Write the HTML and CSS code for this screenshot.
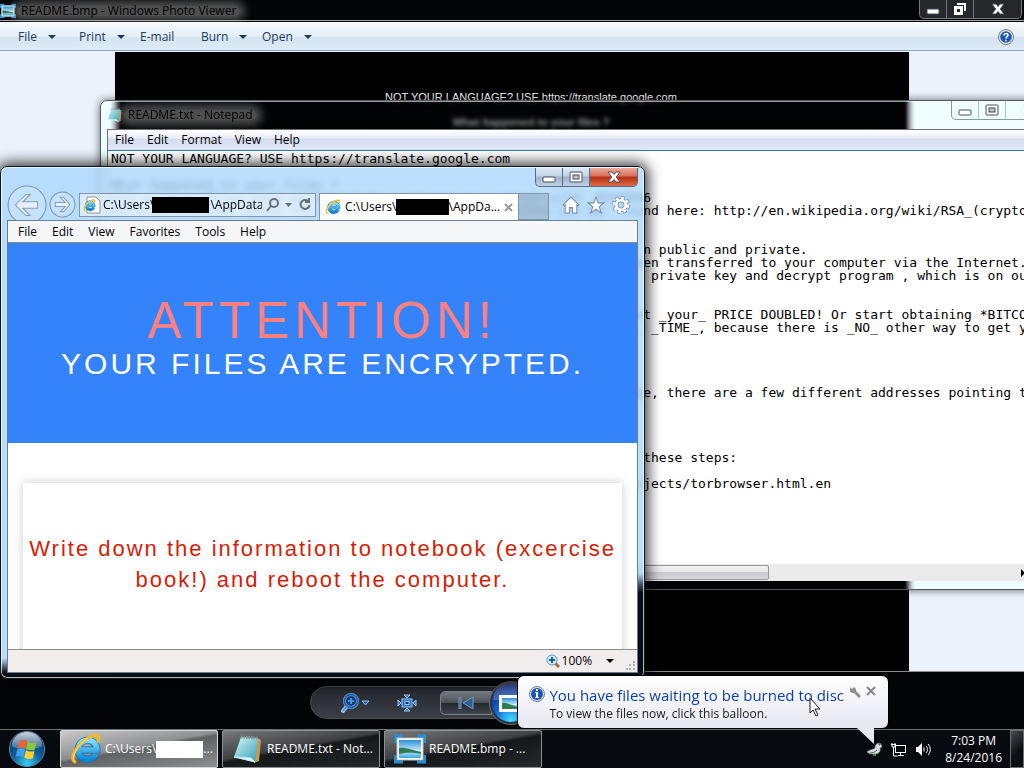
FILE: index.html
```html
<!DOCTYPE html>
<html lang="en">
<head>
    <meta charset="UTF-8">
    <meta name="viewport" content="width=device-width, initial-scale=1.0">
    <title>Desktop</title>
    <link rel="stylesheet" href="styles.css">
</head>
<body>
    <!-- shared icons -->
    <svg class="defs" aria-hidden="true">
        <defs>
            <linearGradient id="ie-blue" x1="0" y1="0" x2="0" y2="1">
                <stop offset="0" stop-color="#7fe0ff"/>
                <stop offset="1" stop-color="#1186d4"/>
            </linearGradient>
            <linearGradient id="sky" x1="0" y1="0" x2="0" y2="1">
                <stop offset="0" stop-color="#2c8fd8"/>
                <stop offset=".6" stop-color="#c9ecfb"/>
                <stop offset="1" stop-color="#3ba3d8"/>
            </linearGradient>
            <linearGradient id="pad" x1="0" y1="0" x2="1" y2="1">
                <stop offset="0" stop-color="#d8f6fa"/>
                <stop offset="1" stop-color="#2f9fb4"/>
            </linearGradient>
            <radialGradient id="orb" cx=".5" cy=".9" r=".9">
                <stop offset="0" stop-color="#35d0f5"/>
                <stop offset=".45" stop-color="#0f5f9c"/>
                <stop offset="1" stop-color="#0b2f55"/>
            </radialGradient>
            <linearGradient id="orb-shine" x1="0" y1="0" x2="0" y2="1">
                <stop offset="0" stop-color="#fff" stop-opacity=".8"/>
                <stop offset="1" stop-color="#fff" stop-opacity=".15"/>
            </linearGradient>
            <radialGradient id="play" cx=".5" cy=".95" r=".9">
                <stop offset="0" stop-color="#3fe0ff"/>
                <stop offset=".5" stop-color="#1560d0"/>
                <stop offset="1" stop-color="#0d2a8a"/>
            </radialGradient>
        </defs>
        <symbol id="i-ie" viewBox="0 0 32 32">
            <path d="M26 21a9.500 9.500 0 1 1 1-4H9" fill="none" stroke="#0f6fb5" stroke-width="7"/>
            <path d="M26 21a9.500 9.500 0 1 1 1-4H9" fill="none" stroke="url(#ie-blue)" stroke-width="5.500"/>
            <path d="M5 29C-2 26 8 10 18 5c7-4 13-4 10 3" fill="none" stroke="#f7b81c" stroke-width="3" stroke-linecap="round"/>
            <path d="M5 28C0 25 9 10 18 5" fill="none" stroke="#ffe27a" stroke-width="1"/>
        </symbol>
        <symbol id="i-pad" viewBox="0 0 32 32">
            <path d="M25 5l4 2-2 21-5 2z" fill="#c79a54"/>
            <path d="M9 4l17 1-3 24-21-5z" fill="url(#pad)"/>
            <path d="M2 24l21 5-4-4z" fill="#e8fbfd" stroke="#bdeff5"/>
            <path d="M9 4l17 1" stroke="#8a8f92" stroke-width="3" stroke-dasharray="1.500 1"/>
        </symbol>
        <symbol id="i-photo" viewBox="0 0 32 28">
            <path d="M1 8V1h8M23 1h8v7M31 20v7h-8M9 27H1v-7" fill="none" stroke="#1f8fd6" stroke-width="3"/>
            <rect x="3" y="3" width="26" height="22" fill="#fff" stroke="#b5c2cc"/>
            <rect x="5" y="5" width="22" height="18" fill="url(#sky)"/>
            <path d="M5 13c6-1 12 2 22 4v2c-9-2-16-1-22 0z" fill="#2f7d54"/>
        </symbol>
        <symbol id="i-min" viewBox="0 0 14 12"><rect x="1" y="6" width="12" height="5" rx="1" fill="#fff" stroke="#4a4e58"/></symbol>
        <symbol id="i-max" viewBox="0 0 14 12">
            <rect x="1" y="1" width="12" height="10" rx="1" fill="#fff" stroke="#4a4e58"/>
            <rect x="4" y="4" width="6" height="4" fill="#b9c4d0" stroke="#4a4e58"/>
        </symbol>
        <symbol id="i-restore" viewBox="0 0 14 12">
            <path d="M4 0h9v8h-2V2H4z" fill="#fff"/>
            <path d="M1 3h9v9H1zM4 6v3h3V6z" fill="#fff" fill-rule="evenodd"/>
        </symbol>
        <symbol id="i-close" viewBox="0 0 14 12">
            <path d="M1 1h4l2 2.500L9 1h4L9.300 6l3.700 5H9L7 8.500 5 11H1l3.700-5z" fill="#fff" stroke="#4a4e58"/>
        </symbol>
        <symbol id="i-down" viewBox="0 0 8 4"><path d="M0 0h8L4 4z" fill="currentColor"/></symbol>
    </svg>

    <div class="desktop">

        <!-- Photo viewer -->
        <section class="window viewer">
            <header class="titlebar">
                <svg class="icon16"><use href="#i-photo"/></svg>
                <span class="glow">README.bmp - Windows Photo Viewer</span>
                <div class="caption">
                    <button class="cap-min" aria-label="Minimize"><svg><use href="#i-min"/></svg></button>
                    <button class="cap-max" aria-label="Restore"><svg><use href="#i-restore"/></svg></button>
                    <button class="cap-close" aria-label="Close"><svg><use href="#i-close"/></svg></button>
                </div>
            </header>
            <nav class="viewer-menu">
                <button>File <svg><use href="#i-down"/></svg></button>
                <button>Print <svg><use href="#i-down"/></svg></button>
                <button>E-mail</button>
                <button>Burn <svg><use href="#i-down"/></svg></button>
                <button>Open <svg><use href="#i-down"/></svg></button>
                <button class="help" aria-label="Help">
                    <svg viewBox="0 0 16 16">
                        <circle cx="8" cy="8" r="7.500" fill="#e8e8e8" stroke="#777"/>
                        <circle cx="8" cy="8" r="5.800" fill="#1d55b8"/>
                        <path d="M6 6.500C6 3.800 10.200 4 10 6.300 9.900 7.700 8 7.700 8 9.500M8 10.700v1.500" fill="none" stroke="#fff" stroke-width="1.600"/>
                    </svg>
                </button>
            </nav>
            <div class="viewer-canvas">
                <div class="photo">
                    <p>NOT YOUR LANGUAGE? USE https://translate.google.com</p>
                    <p><strong>What happened to your files ?</strong></p>
                </div>
            </div>
            <footer class="viewer-controls">
                <div class="pill">
                    <button class="zoom" aria-label="Change the display size">
                        <svg width="30" height="20" viewBox="0 0 30 20">
                            <path d="M7 13l-4 5" stroke="#9cc7f5" stroke-width="4" stroke-linecap="round"/>
                            <circle cx="11" cy="8" r="6.500" fill="#1c3a66" stroke="#7fb0e6" stroke-width="3"/>
                            <circle cx="11" cy="8" r="6.500" fill="none" stroke="#1e62b8" stroke-width="2"/>
                            <path d="M7 13l-4 5M11 5v6M8 8h6" stroke="#3f92ee" stroke-width="2"/>
                            <path d="M22 8h7l-3.500 4z" fill="#1e62b8" stroke="#8dbdf0"/>
                        </svg>
                    </button>
                    <button class="fit" aria-label="Actual size">
                        <svg width="20" height="18" viewBox="0 0 20 18">
                            <g fill="#2a72c8" stroke="#9cc7f5">
                                <rect x="5" y="5" width="10" height="8"/>
                                <rect x="8" y="7.500" width="4" height="3" fill="#22364f"/>
                                <path d="M7 1h6l-3 3zM7 17h6l-3-3zM1 6v6l3-3zM19 6v6l-3-3z"/>
                            </g>
                        </svg>
                    </button>
                    <button class="prev" aria-label="Previous">
                        <svg width="16" height="12" viewBox="0 0 16 12">
                            <path d="M1 0h2v12H1zM15 0v12L5 6z" fill="#2d5f96" stroke="#7d9cba"/>
                        </svg>
                    </button>
                    <button class="show" aria-label="Play slide show">
                        <svg width="44" height="44" viewBox="0 0 44 44">
                            <circle cx="22" cy="22" r="21.500" fill="#2a3340" stroke="#66707c"/>
                            <circle cx="22" cy="22" r="19" fill="url(#play)"/>
                            <path d="M4 19a18 18 0 0 1 36 0z" fill="#fff" opacity=".2"/>
                            <rect x="10" y="14" width="24" height="17" fill="#fff"/>
                            <rect x="13" y="17" width="18" height="11" fill="url(#sky)"/>
                            <path d="M13 22c5-1 10 3 18 4v2H13z" fill="#2f7d54"/>
                        </svg>
                    </button>
                </div>
            </footer>
        </section>

        <!-- Notepad -->
        <section class="window notepad">
            <header class="titlebar">
                <svg class="icon16"><use href="#i-pad"/></svg>
                <span class="glow">README.txt - Notepad</span>
                <div class="caption">
                    <button class="cap-min" aria-label="Minimize"><svg><use href="#i-min"/></svg></button>
                    <button class="cap-max" aria-label="Maximize"><svg><use href="#i-max"/></svg></button>
                    <button class="cap-close" aria-label="Close"><svg><use href="#i-close"/></svg></button>
                </div>
            </header>
            <nav class="menubar">
                <button>File</button>
                <button>Edit</button>
                <button>Format</button>
                <button>View</button>
                <button>Help</button>
            </nav>
            <textarea class="note" wrap="off" readonly aria-label="README.txt">NOT YOUR LANGUAGE? USE https://translate.google.com

What happened to your files ?
All of your files were protected by a strong encryption with  RSA4096
More information about the encryption keys using RSA4096 can be  found here: http://en.wikipedia.org/wiki/RSA_(cryptography)


                                                                    n public and private.
                                                                  been transferred to your computer via the Internet.
                                                                     private key and decrypt program , which is on our


                                                                  get _your_ PRICE DOUBLED! Or start obtaining *BITCOIN*
                                                                  L_ _TIME_, because there is _NO_ other way to get your




                                                                 page, there are a few different addresses pointing to




                                                                    these steps:

                                                                   ojects/torbrowser.html.en</textarea>
            <div class="hscroll"><div class="thumb"></div><svg><use href="#i-down"/></svg></div>
        </section>

        <!-- Internet Explorer -->
        <section class="window browser">
            <div class="caption">
                <button class="cap-min" aria-label="Minimize"><svg><use href="#i-min"/></svg></button>
                <button class="cap-max" aria-label="Maximize"><svg><use href="#i-max"/></svg></button>
                <button class="cap-close" aria-label="Close"><svg><use href="#i-close"/></svg></button>
            </div>
            <div class="navrow">
                <button class="back" aria-label="Back">
                    <svg viewBox="0 0 38 38">
                        <circle cx="19" cy="19" r="18" fill="#fff" fill-opacity=".15" stroke="#7f95ab"/>
                        <path d="M8 19l10-10h4l-7 7h14v6H15l7 7h-4z" fill="#e6f2fd" stroke="#8a9cae"/>
                    </svg>
                </button>
                <button class="forward" aria-label="Forward">
                    <svg viewBox="0 0 26 26">
                        <circle cx="13" cy="13" r="12" fill="#fff" fill-opacity=".15" stroke="#7f95ab"/>
                        <path d="M20 13l-6-7h-3l4.500 5H6v4h9.500L11 20h3z" fill="#e6f2fd" stroke="#8a9cae"/>
                    </svg>
                </button>
                <div class="address">
                    <svg class="page-icon" viewBox="0 0 18 18">
                        <path d="M4 1h9l4 4v12H4z" fill="#fff" stroke="#8b949e"/>
                        <use href="#i-ie" x="0" y="3" width="13" height="13"/>
                    </svg>
                    <div class="url">
                        <input type="text" aria-label="Address" readonly value="C:\Users\&nbsp;&nbsp;&nbsp;&nbsp;&nbsp;&nbsp;&nbsp;&nbsp;&nbsp;&nbsp;&nbsp;&nbsp;&nbsp;&nbsp;&nbsp;&nbsp;&nbsp;&nbsp;\AppData\">
                        <span class="redact"></span>
                    </div>
                    <svg class="addr-tools" width="46" height="16" viewBox="0 0 46 16" fill="none" stroke="#666f7a" stroke-width="2">
                        <circle cx="8" cy="6" r="4"/>
                        <path d="M5 9l-4 5"/>
                        <path d="M19 6h7l-3.500 4z" fill="#666f7a" stroke="none"/>
                        <path d="M42 4a4.500 4.500 0 1 0 1.500 4M43 1v4h-4"/>
                    </svg>
                </div>
                <div class="tab">
                    <svg class="icon16"><use href="#i-ie"/></svg>
                    <span class="tab-title">C:\Users\<i class="mask"></i>\AppDa...</span>
                    <button aria-label="Close tab">
                        <svg width="9" height="9" viewBox="0 0 9 9"><path d="M1 1l7 7M8 1L1 8" stroke="#999" stroke-width="2"/></svg>
                    </button>
                </div>
                <button class="newtab" aria-label="New tab"></button>
                <div class="tools">
                    <button aria-label="Home">
                        <svg viewBox="0 0 17 17"><path d="M8.500 1L16 8.500l-1 1-1-1V16h-4v-5H7v5H3V8.500l-1 1-1-1z" fill="#fff" stroke="#7b8ea3"/></svg>
                    </button>
                    <button aria-label="Favorites">
                        <svg viewBox="0 0 17 17"><path d="M8.500 1l2 5.500H16l-4.500 3.500 2 6-5-3.500-5 3.500 2-6L1 6.500h5.500z" fill="#fff" stroke="#7b8ea3"/></svg>
                    </button>
                    <button aria-label="Settings">
                        <svg viewBox="0 0 17 17">
                            <circle cx="8.500" cy="8.500" r="6.500" fill="none" stroke="#7b8ea3" stroke-width="4" stroke-dasharray="3 2.100"/>
                            <circle cx="8.500" cy="8.500" r="4.500" fill="none" stroke="#7b8ea3" stroke-width="4"/>
                            <circle cx="8.500" cy="8.500" r="6.500" fill="none" stroke="#fff" stroke-width="2.500" stroke-dasharray="2.600 2.500"/>
                            <circle cx="8.500" cy="8.500" r="4.500" fill="none" stroke="#fff" stroke-width="2.500"/>
                        </svg>
                    </button>
                </div>
            </div>
            <div class="client">
                <nav class="menubar">
                    <button>File</button>
                    <button>Edit</button>
                    <button>View</button>
                    <button>Favorites</button>
                    <button>Tools</button>
                    <button>Help</button>
                </nav>
                <main class="page">
                    <div class="hero">
                        <h1>ATTENTION!</h1>
                        <h2>YOUR FILES ARE ENCRYPTED.</h2>
                    </div>
                    <div class="card">
                        <p>Write down the information to notebook (excercise book!) and reboot the computer.</p>
                    </div>
                </main>
                <footer class="status">
                    <button>
                        <svg width="14" height="14" viewBox="0 0 14 14">
                            <path d="M9 9l4 4" stroke="#a5703a" stroke-width="3"/>
                            <circle cx="6" cy="6" r="5" fill="#dff0ff" stroke="#5b8fc4"/>
                            <path d="M6 3v6M3 6h6" stroke="#0d5cb8" stroke-width="2"/>
                        </svg>
                        100%
                        <svg class="arrow"><use href="#i-down"/></svg>
                    </button>
                    <svg class="grip" width="9" height="9" viewBox="0 0 9 9" fill="#b0aeae">
                        <path d="M7 0h2v2H7zM7 3h2v2H7zM7 7h2v2H7zM3 3h2v2H3zM3 7h2v2H3zM0 7h2v2H0z"/>
                    </svg>
                </footer>
            </div>
        </section>

        <footer class="taskbar">
            <button class="start" aria-label="Start">
                <svg viewBox="0 0 40 40">
                    <circle cx="20" cy="20" r="18.500" fill="url(#orb)" stroke="#5f87a8"/>
                    <path d="M4 17a16 15 0 0 1 32 0c-9 5-23 5-32 0z" fill="url(#orb-shine)"/>
                    <path d="M13 11c2-1 5-1 7 1l-2 8c-2-2-5-2-8-1z" fill="#f0642c"/>
                    <path d="M21 12c3 2 6 2 9 1l-2 8c-3 1-6 0-9-1z" fill="#8cc63f"/>
                    <path d="M10 20c3-1 6-1 8 1l-2 8c-3-2-5-2-8-1z" fill="#3fa2e8"/>
                    <path d="M19 21c3 2 6 2 9 1l-2 8c-4 1-7 0-9-1z" fill="#ffd02f"/>
                </svg>
            </button>
            <button class="task active">
                <svg class="icon32"><use href="#i-ie"/></svg>
                <span>C:\Users\<i class="mask"></i>...</span>
            </button>
            <button class="task">
                <svg class="icon32"><use href="#i-pad"/></svg>
                <span>README.txt - Not...</span>
            </button>
            <button class="task">
                <svg class="icon32"><use href="#i-photo"/></svg>
                <span>README.bmp - ...</span>
            </button>
            <div class="tray">
                <button aria-label="Burn disc">
                    <svg width="17" height="16" viewBox="0 0 17 16">
                        <path d="M1 11c3-3 6-2 8-4 0-4 3-6 6-4l1 3-2 1c1 4-2 6-5 6H4z" fill="#d9dde0" stroke="#7d858c" stroke-width=".700"/>
                        <path d="M4 12c3 0 5-1 7-3M13 3h1v1h-1z" stroke="#555" fill="none"/>
                        <path d="M7 14h3" stroke="#4caf50" stroke-width="1.500"/>
                    </svg>
                </button>
                <button aria-label="Network">
                    <svg width="16" height="15" viewBox="0 0 16 15" fill="none" stroke="#fff">
                        <rect x="4.500" y="3.500" width="10" height="7"/>
                        <path d="M7 13.500h6M9.500 11v2M2.500 5v9h4M1 1v4h3V1M0 2.500h5"/>
                    </svg>
                </button>
                <button aria-label="Volume">
                    <svg width="16" height="15" viewBox="0 0 16 15">
                        <path d="M1 5h2l4-4v13l-4-4H1z" fill="#fff"/>
                        <path d="M9 5.500v4M11 4c2 2 2 5 0 7M13 2c3 3 3 8 0 11" fill="none" stroke="#fff"/>
                    </svg>
                </button>
                <div class="clock">
                    <div>7:03 PM</div>
                    <div>8/24/2016</div>
                </div>
                <button class="peek" aria-label="Show desktop"></button>
            </div>
        </footer>

        <aside class="balloon">
            <svg class="info" viewBox="0 0 16 16">
                <circle cx="8" cy="8" r="7.500" fill="#dfe6f2" stroke="#6d7f9e"/>
                <circle cx="8" cy="8" r="6" fill="#1c56b8"/>
                <path d="M7 3h2v2H7zM6 6h3v5h1v1H6v-1h1V7H6z" fill="#fff"/>
            </svg>
            <div class="balloon-text">
                <a href="#">You have files waiting to be burned to disc</a>
                <p>To view the files now, click this balloon.</p>
            </div>
            <button aria-label="Options">
                <svg width="12" height="12" viewBox="0 0 12 12">
                    <path d="M4 4l7 7" stroke="#8e8e93" stroke-width="3"/>
                    <path d="M1 1l2 2 2-2 2 2v3L4 7 1 6z" fill="#8e8e93"/>
                </svg>
            </button>
            <button aria-label="Close">
                <svg width="10" height="10" viewBox="0 0 10 10"><path d="M1 1l8 8M9 1L1 9" stroke="#85858a" stroke-width="2"/></svg>
            </button>
            <svg class="tail" width="20" height="18" viewBox="0 0 20 18"><path d="M1 0h17v16z" fill="#e7e7f2"/></svg>
        </aside>

        <svg class="cursor" width="12" height="20" viewBox="0 0 12 20">
            <path d="M1 1v15l3-3 3 6 2-1-3-6h5z" fill="#fff" stroke="#1a1a2e"/>
        </svg>
    </div>
</body>
</html>
```
FILE: styles.css
```css
:root {
    --glass: rgba(170, 215, 252, 0.8);
    --glass-dark: rgba(8, 14, 20, 0.95);
    --link: #0b3fae;
}

* {
    box-sizing: border-box;
}

body {
    margin: 0;
    font-family: "Segoe UI", "Open Sans", "Noto Sans", sans-serif;
    font-size: 12px;
    line-height: 16px;
    color: #000;
    background-color: #000;
}

button {
    display: flex;
    align-items: center;
    padding: 0;
    border: none;
    background: none;
    font: inherit;
    color: inherit;
    white-space: nowrap;
    flex-shrink: 0;
}

p, h1, h2 {
    margin: 0;
}

svg {
    display: block;
    flex-shrink: 0;
}

.defs {
    position: absolute;
    width: 0;
    height: 0;
}

.icon16 {
    width: 16px;
    height: 16px;
}

.icon32 {
    width: 32px;
    height: 32px;
}

.desktop {
    position: relative;
    height: 100vh;
    overflow: hidden;
}

.window {
    position: absolute;
    display: flex;
    flex-direction: column;
}

.titlebar {
    display: flex;
    align-items: center;
    gap: 5px;
}

.glow {
    padding: 0 4px;
    margin-left: -4px;
    border-radius: 8px;
    background-color: rgba(170, 170, 170, 0.45);
    box-shadow: 0 0 8px 5px rgba(170, 170, 170, 0.45);
    line-height: 10px;
}

.caption {
    display: flex;
    align-self: flex-start;
    margin-left: auto;
    height: 19px;
    border: 1px solid #5d6b7c;
    border-top: none;
    border-radius: 0 0 5px 5px;
    overflow: hidden;
}

.caption button {
    justify-content: center;
    width: 27px;
    border-right: 1px solid #5d6b7c;
}

.caption .cap-close {
    width: 47px;
    border-right: none;
}

.caption svg {
    width: 14px;
    height: 12px;
}

.menubar {
    display: flex;
    align-items: center;
}

/* photo viewer */
.viewer {
    inset: 0 0 39px 0;
    background-color: #040507;
}

.viewer .titlebar {
    height: 21px;
    padding: 0 2px 0 0;
    border-bottom: 1px solid #a5a5a8;
}

.viewer .titlebar .icon16,
.viewer .glow {
    margin-top: 2px;
}

.viewer .caption {
    background-color: #26272b;
    border-color: #77787c;
}

.viewer .caption button {
    border-color: #77787c;
}

.viewer-menu {
    display: flex;
    align-items: center;
    height: 29px;
    margin-top: 1px;
    padding: 0 10px 0 18px;
    border-top: 1px solid #fff;
    border-bottom: 1px solid #8fa5bf;
    background: linear-gradient(#f5fafe, #e3eef8 50%, #d4e4f1 51%, #dcebf6);
    color: #1e395b;
}

.viewer-menu button {
    gap: 11px;
    width: 61px;
}

.viewer-menu button svg {
    width: 8px;
    height: 4px;
}

.viewer-menu .help {
    width: 16px;
    margin-left: auto;
}

.viewer-menu .help svg {
    width: 16px;
    height: 16px;
}

.viewer-canvas {
    flex: 1;
    padding: 1px 115px 0;
    background-color: #ebf2fb;
}

.photo {
    height: 100%;
    padding: 38px 0 0 38px;
    background-color: #000;
    color: #fff;
    font: 11px/14px "Liberation Sans", Arial, sans-serif;
    text-align: center;
}

.photo p {
    margin-bottom: 11px;
}

.viewer-controls {
    display: flex;
    justify-content: center;
    align-items: center;
    height: 58px;
    border-top: 1px solid #8a8b8e;
}

.pill {
    display: flex;
    align-items: center;
    width: 404px;
    height: 33px;
    margin-top: 4px;
    border: 1px solid #4a4e55;
    border-radius: 17px;
    background: linear-gradient(#25282d, #3a3e45);
}

.pill .zoom {
    margin-left: 29px;
}

.pill .fit {
    margin-left: 27px;
}

.pill .prev {
    justify-content: center;
    width: 52px;
    height: 24px;
    margin-left: 23px;
    border: 1px solid #7b8188;
    border-radius: 5px 0 0 5px;
    background: linear-gradient(#777d84, #4c5158 48%, #23272d 50%, #3f454d);
}

.pill .show {
    margin-left: -3px;
}

/* notepad */
.notepad {
    left: 100px;
    right: -40px;
    top: 100px;
    bottom: 178px;
    padding: 0 9px 8px 6px;
    border: 1px solid #55595e;
    border-radius: 7px 7px 5px 5px;
    background: linear-gradient(90deg, #effdfe 9px, rgba(4, 6, 10, 0.5) 20px, rgba(4, 6, 10, 0.5) 804px, #effdfe 814px);
    box-shadow: inset 0 1px 0 rgba(255, 255, 255, 0.6), 0 0 8px rgba(0, 0, 0, 0.6);
    backdrop-filter: blur(2px);
}

.notepad .titlebar {
    height: 28px;
}

.notepad .caption {
    border-color: #8e979c;
}

.notepad .caption button {
    border-color: #b9c2c6;
}

.notepad .menubar {
    gap: 13px;
    height: 22px;
    padding-left: 7px;
    border-top: 1px solid #6d7075;
    border-left: 1px solid #6d7075;
    border-bottom: 1px solid #2a7ab8;
    background: linear-gradient(#fff, #e9edf7 40%, #d3dbef 45%, #e2e8f6);
}

.note {
    flex: 1;
    padding: 1px 3px;
    border: none;
    border-left: 1px solid #6d7075;
    outline: none;
    resize: none;
    overflow: hidden;
    background-color: #fff;
    color: #000;
    font: 13px/13px "Lucida Console", "DejaVu Sans Mono", monospace;
    white-space: pre;
}

.hscroll {
    display: flex;
    align-items: center;
    height: 17px;
    padding-right: 27px;
    background-color: #ebebeb;
}

.hscroll .thumb {
    width: 72%;
    height: 15px;
    margin-right: auto;
    border: 1px solid #97979b;
    border-radius: 2px;
    background: linear-gradient(#f3f3f3, #e4e4e6 48%, #cacace 50%, #d8d8dc);
}

.hscroll svg {
    width: 8px;
    height: 4px;
    transform: rotate(-90deg);
}

/* browser */
.browser {
    left: 0;
    top: 166px;
    bottom: 89px;
    width: 63%;
    padding: 1px 6px 5px;
    border: 1px solid #10161d;
    border-radius: 7px;
    background:
        linear-gradient(var(--glass) calc(100% - 20px), var(--glass-dark) calc(100% - 6px)) left / 10px 100% no-repeat,
        linear-gradient(var(--glass) calc(100% - 105px), var(--glass-dark) calc(100% - 85px)) 10px 0 no-repeat;
    box-shadow: inset 0 0 0 1px rgba(255, 255, 255, 0.7), 0 0 14px 3px rgba(0, 0, 0, 0.8);
    backdrop-filter: blur(3px);
}

.browser > .caption {
    background: linear-gradient(#dbe9f6, #c3d6e9 45%, #9db4cb 50%, #bcd2e6);
}

.browser > .caption .cap-close {
    background: linear-gradient(#eba999, #d9705b 45%, #b92f14 50%, #da6a45);
}

.navrow {
    display: flex;
    align-items: center;
    height: 33px;
    padding-top: 2px;
}

.navrow .back svg {
    width: 40px;
    height: 40px;
}

.navrow .forward {
    margin: 0 3px 0 2px;
}

.navrow .forward svg {
    width: 27px;
    height: 27px;
}

.address {
    display: flex;
    align-items: center;
    flex: 1;
    min-width: 0;
    height: 24px;
    padding: 0 3px;
    border: 1px solid #8295aa;
    background-color: rgba(240, 247, 254, 0.6);
}

.page-icon {
    width: 18px;
    height: 18px;
}

.url {
    position: relative;
    flex: 1;
    min-width: 0;
    margin: 0 4px 0 2px;
}

.url input {
    display: block;
    width: 100%;
    padding: 0;
    border: none;
    outline: none;
    background: none;
    font: inherit;
}

.redact {
    position: absolute;
    left: 49px;
    top: 0;
    width: 57px;
    height: 16px;
    background-color: #000;
}

.tab {
    display: flex;
    align-items: center;
    gap: 4px;
    width: 200px;
    height: 27px;
    margin: 0 0 -4px 3px;
    padding: 0 5px;
    border: 1px solid #8295aa;
    border-bottom: none;
    background-color: #fff;
}

.tab-title {
    display: flex;
    align-items: center;
    flex: 1;
    min-width: 0;
    white-space: nowrap;
}

.tab .mask {
    width: 57px;
    height: 16px;
    background-color: #000;
}

.newtab {
    width: 30px;
    height: 27px;
    margin-bottom: -4px;
    border: 1px solid #8295aa;
    border-left: none;
    background-color: rgba(150, 175, 200, 0.6);
}

.tools {
    display: flex;
    gap: 7px;
    margin: 0 8px 0 13px;
}

.tools svg {
    width: 18px;
    height: 18px;
}

.client {
    display: flex;
    flex-direction: column;
    flex: 1;
    min-height: 0;
    border: 1px solid #6c7f92;
    background-color: #fff;
}

.browser .menubar {
    gap: 15px;
    height: 22px;
    padding-left: 10px;
    border-bottom: 1px solid #8a8a8a;
    background-color: #f5f6f7;
}

.page {
    flex: 1;
    min-height: 0;
    overflow: hidden;
    font-family: Arial, "Liberation Sans", sans-serif;
    text-align: center;
}

.hero {
    height: 200px;
    padding-top: 50px;
    background-color: #3583fa;
}

.hero h1 {
    color: #ff8080;
    font-size: 51px;
    font-weight: normal;
    line-height: 56px;
    letter-spacing: 5px;
}

.hero h2 {
    color: #fff;
    font-size: 30px;
    font-weight: normal;
    line-height: 30px;
    letter-spacing: 3px;
}

.card {
    height: 300px;
    margin: 40px 15px 0;
    padding-top: 50px;
    box-shadow: 0 0 10px rgba(0, 0, 0, 0.2);
}

.card p {
    color: #d71c06;
    font-size: 22px;
    line-height: 31px;
    letter-spacing: 2px;
}

.status {
    display: flex;
    align-items: center;
    justify-content: flex-end;
    height: 23px;
    border-top: 1px solid #8d8d8d;
    background-color: #f0edec;
}

.status button {
    gap: 2px;
}

.status .arrow {
    width: 8px;
    height: 4px;
    margin: 0 12px 0 12px;
}

.grip {
    align-self: flex-end;
    margin: 0 2px 2px 0;
}

/* taskbar */
.taskbar {
    position: absolute;
    left: 0;
    right: 0;
    bottom: 0;
    display: flex;
    align-items: center;
    gap: 4px;
    height: 39px;
    border-top: 1px solid #6a6f74;
    background-color: #070b0f;
    color: #fff;
}

.start {
    width: 56px;
    padding-left: 8px;
}

.start svg {
    width: 38px;
    height: 38px;
}

.task {
    gap: 3px;
    width: 158px;
    height: 38px;
    padding-left: 9px;
    border: 1px solid #8d9093;
    border-radius: 2px;
    background: linear-gradient(170deg, #77797b, #3d3f41 45%, #15181a 50%, #25282a);
}

.task.active {
    border-color: #d5d6d7;
    background: linear-gradient(170deg, #c9c9ca, #8f9092 45%, #5f6264 50%, #8d8f90);
}

.task span {
    display: flex;
    align-items: center;
}

.task .mask {
    width: 47px;
    height: 17px;
    background-color: #fff;
}

.tray {
    display: flex;
    align-items: center;
    gap: 8px;
    height: 100%;
    margin-left: auto;
}

.clock {
    margin: 0 0 0 6px;
    text-align: center;
    line-height: 17px;
}

.peek {
    width: 14px;
    height: 100%;
    border: 1px solid #6a6f74;
    background: linear-gradient(135deg, #4b4e51, #0b0e11 60%);
}

/* balloon tip over the tray */
.balloon {
    position: absolute;
    right: 135px;
    bottom: 39px;
    display: flex;
    align-items: flex-start;
    gap: 7px;
    padding: 8px 12px 6px 11px;
    border: 1px solid #000;
    border-radius: 7px;
    background: linear-gradient(#fff, #e7e7f2);
    color: #1a1a1a;
}

.balloon .info {
    width: 16px;
    height: 16px;
    margin: 2px -3px 0 0;
}

.balloon-text a {
    display: block;
    color: var(--link);
    font-size: 15px;
    line-height: 22px;
    text-decoration: none;
    white-space: nowrap;
}

.balloon button {
    margin: 2px 0 0 -2px;
}

.tail {
    position: absolute;
    right: 12px;
    top: 100%;
}

.cursor {
    position: absolute;
    left: 809px;
    top: 697px;
}
```
